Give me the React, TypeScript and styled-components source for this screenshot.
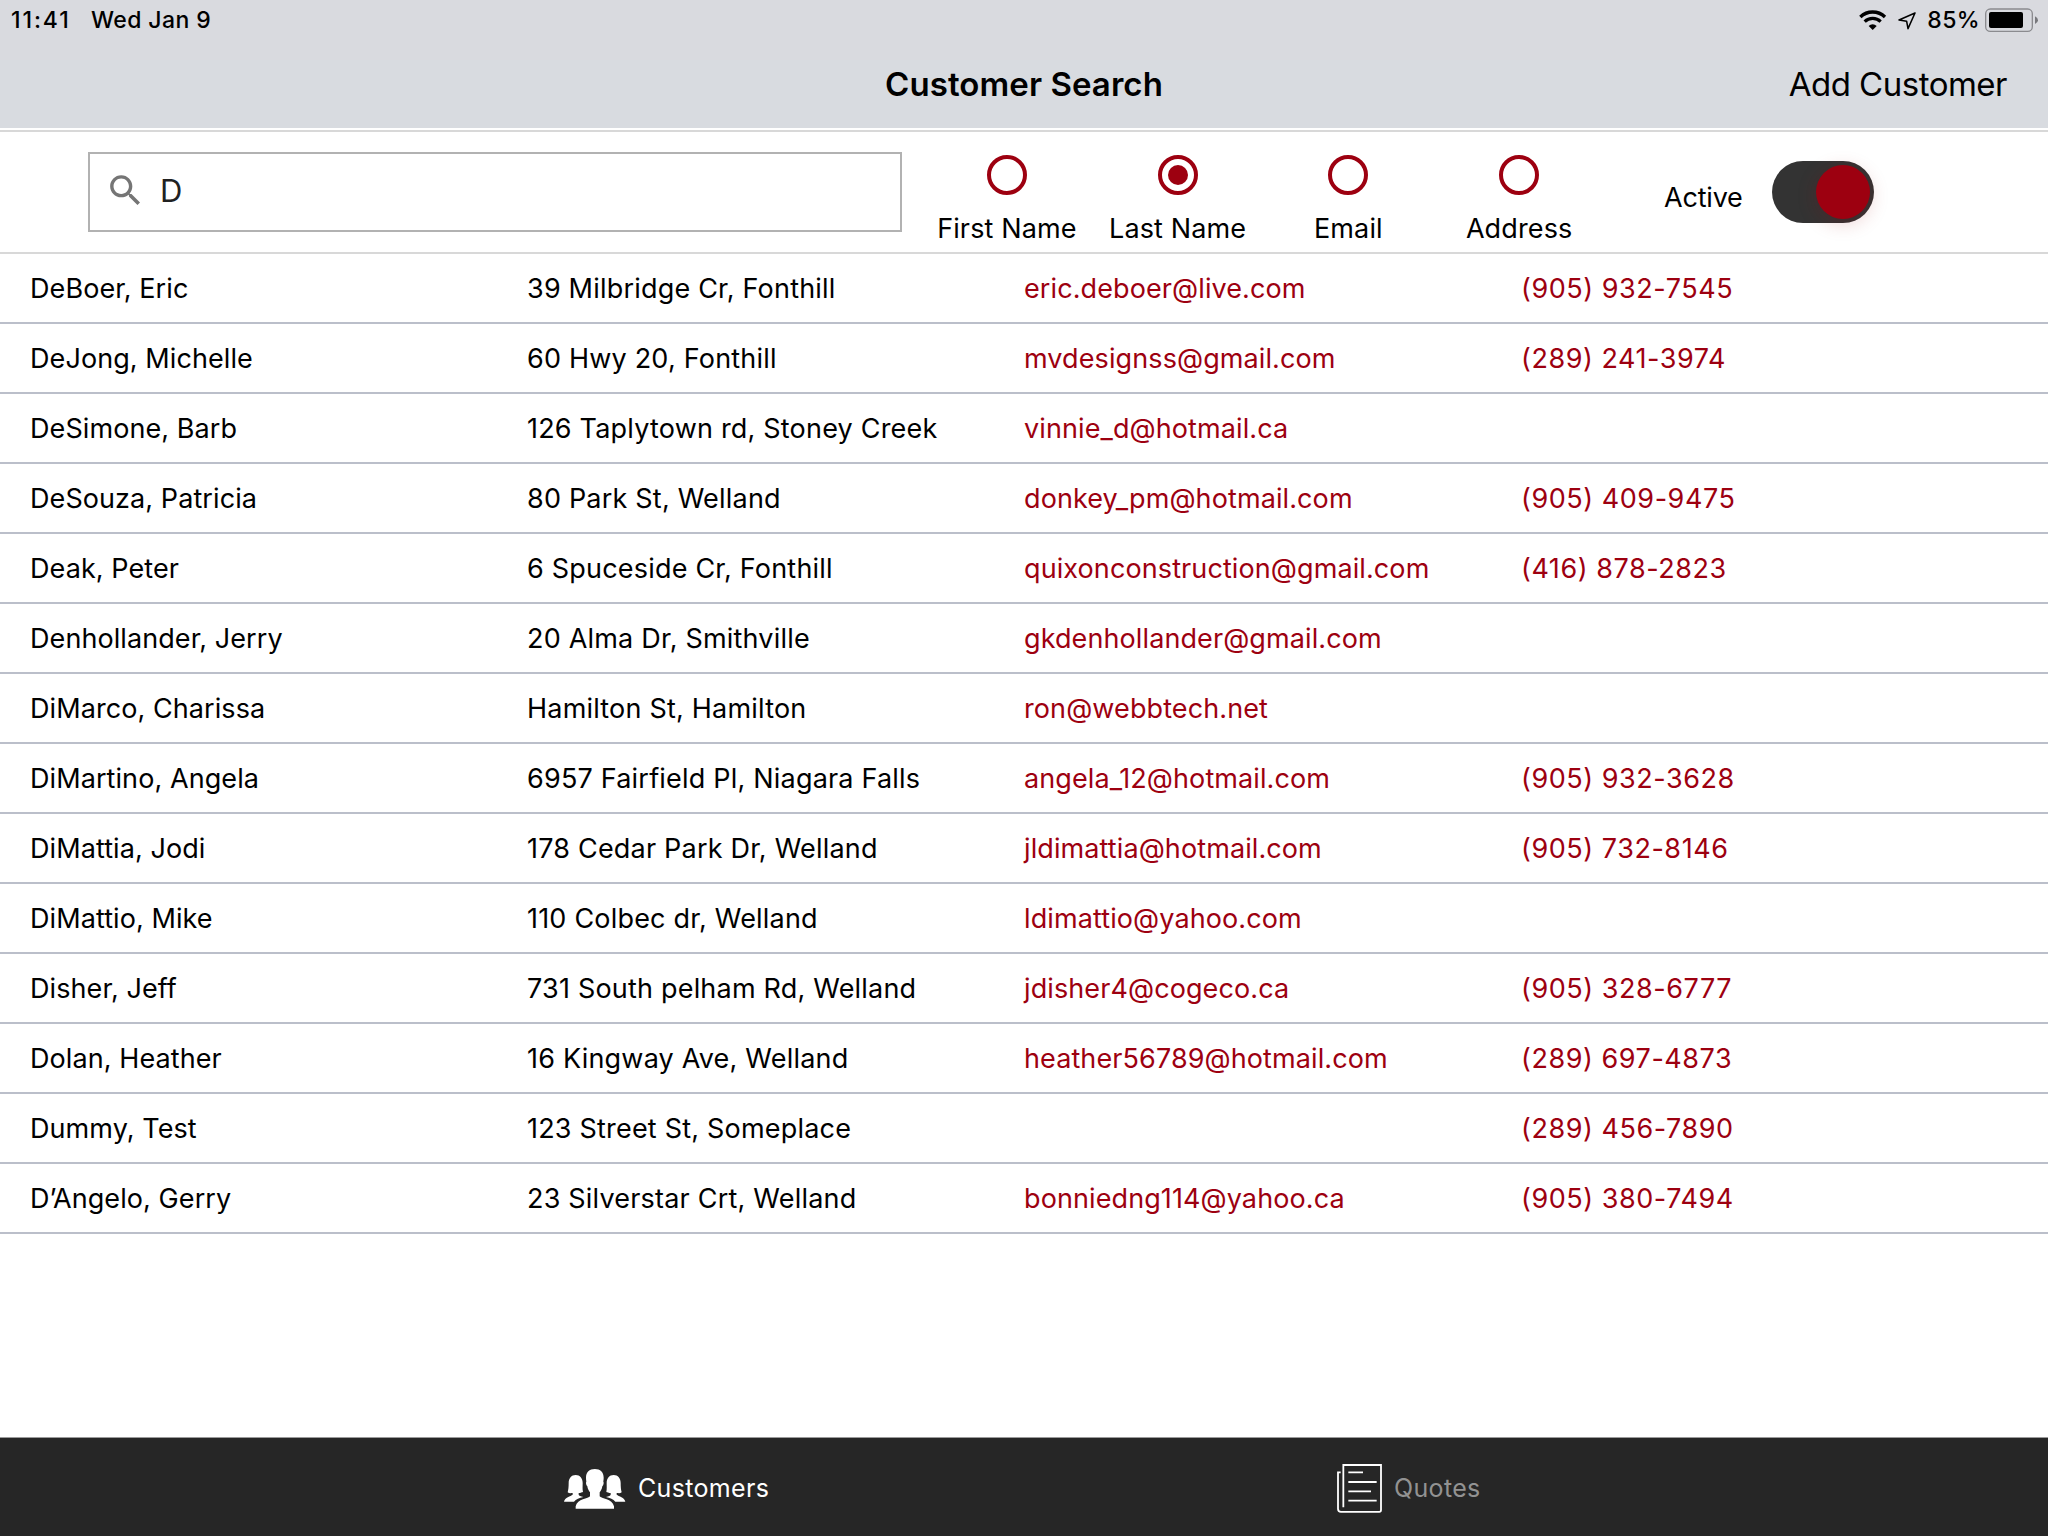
import React, { useState } from 'react';
import styled, { createGlobalStyle } from 'styled-components';

const red = '#9d0010';

const GlobalStyle = createGlobalStyle`
  * { box-sizing: border-box; }
  body {
    margin: 0;
    background: #fff;
    color: #000;
    font-family: Inter, "Liberation Sans", sans-serif;
    font-feature-settings: "calt" 0;
  }
`;

const Screen = styled.div`
  display: flex;
  flex-direction: column;
  width: 2048px;
  height: 1536px;
  overflow: hidden;
  background: #fff;
`;

const Header = styled.header`
  flex: none;
  height: 128px;
  background: linear-gradient(#d9dadf 60px, #d8dbe0 60px);
`;

const StatusBar = styled.div`
  display: flex;
  justify-content: space-between;
  height: 40px;
  padding: 0 10px 0 11px;
  font-size: 23px;
  font-weight: 500;
  line-height: 39px;
  letter-spacing: 0.4px;
`;

const StatusGroup = styled.div`
  display: flex;
  align-items: center;
`;

const Time = styled.span`
  width: 80px;
  letter-spacing: 1.9px;
`;

const WifiIcon = styled.svg`
  width: 28px;
  height: 21px;
  margin-right: 11px;
`;

const LocationIcon = styled.svg`
  width: 18px;
  height: 18px;
  margin: 2px 11px 0 0;
`;

const BatteryIcon = styled.svg`
  width: 53px;
  height: 24px;
  margin-left: 5px;
`;

const NavBar = styled.div`
  display: grid;
  grid-template-columns: 1fr auto 1fr;
  align-items: center;
  height: 88px;
  padding: 0 41px;
`;

const Title = styled.h1`
  grid-column: 2;
  margin: 0;
  font-size: 33px;
  font-weight: 600;
  letter-spacing: 0.07px;
`;

const NavAction = styled.button`
  justify-self: end;
  padding: 0;
  border: 0;
  background: none;
  color: #000;
  font: inherit;
  font-size: 33px;
  letter-spacing: -0.5px;
`;

const FilterBar = styled.section`
  display: grid;
  grid-template-columns: 921.5px 683px 1fr;
  flex: none;
  height: 124px;
  margin-top: 2px;
  border-top: 2px solid #d8d8d8;
  border-bottom: 2px solid #d8d8d8;
  background: #fff;
`;

const SearchBox = styled.label`
  display: flex;
  align-items: center;
  width: 814px;
  height: 80px;
  margin: 20px 0 0 88px;
  padding: 0 16px 3px 15px;
  border: 2px solid #b2b2b2;
`;

const SearchIcon = styled.svg`
  flex: none;
  width: 41px;
  height: 41px;
  margin-right: 14px;
  fill: #757575;
`;

const SearchInput = styled.input`
  flex: 1;
  min-width: 0;
  height: 60px;
  padding: 0;
  border: 0;
  outline: 0;
  background: none;
  color: #212121;
  font: inherit;
  font-size: 31px;
`;

const RadioGroup = styled.div`
  display: grid;
  grid-template-columns: repeat(4, 1fr);
`;

const RadioOption = styled.button`
  display: flex;
  flex-direction: column;
  align-items: center;
  padding: 23px 0 0;
  border: 0;
  background: none;
  color: #000;
  font: inherit;
  font-size: 27px;
  line-height: 33px;
  letter-spacing: 0.12px;
  white-space: nowrap;
`;

const RadioCircle = styled.span<{ $selected: boolean }>`
  display: grid;
  place-items: center;
  width: 40px;
  height: 40px;
  margin-bottom: 17px;
  border: 4px solid ${red};
  border-radius: 50%;

  &::after {
    content: "";
    width: 20px;
    height: 20px;
    border-radius: 50%;
    background: ${(p) => (p.$selected ? red : 'transparent')};
  }
`;

const ActiveFilter = styled.div`
  display: flex;
  align-items: center;
  padding-left: 59.5px;
  font-size: 27px;
  letter-spacing: -0.2px;
`;

const ActiveLabel = styled.span`
  width: 108px;
  padding-top: 11px;
`;

const Switch = styled.button<{ $on: boolean }>`
  display: flex;
  justify-content: ${(p) => (p.$on ? 'flex-end' : 'flex-start')};
  width: 102px;
  height: 62px;
  padding: 4px;
  border: 0;
  border-radius: 31px;
  background: #333;
`;

const Thumb = styled.span`
  width: 54px;
  height: 54px;
  border-radius: 50%;
  background: ${red};
  box-shadow: 0 4px 20px rgba(157, 0, 16, 0.2);
`;

const CustomerList = styled.main`
  flex: 1;
  min-height: 0;
`;

const CustomerRow = styled.div`
  display: grid;
  grid-template-columns: repeat(4, 497px);
  align-items: center;
  height: 70px;
  padding-left: 30px;
  border-bottom: 2px solid #bbbfca;
  font-size: 27px;
  white-space: nowrap;
`;

const Cell = styled.span<{ $tracking: number; $link?: boolean }>`
  color: ${(p) => (p.$link ? red : '#000')};
  letter-spacing: ${(p) => p.$tracking}px;
`;

const TabBar = styled.nav`
  display: flex;
  flex: none;
  height: 99px;
  padding: 2px 0 0 564px;
  border-top: 1px solid #9b9b9b;
  background: #262626;
`;

const Tab = styled.button<{ $active: boolean }>`
  display: flex;
  flex: 0 0 ${(p) => (p.$active ? 773 : 711)}px;
  align-items: center;
  padding: 0;
  border: 0;
  background: none;
  color: ${(p) => (p.$active ? '#fff' : '#929292')};
  font: inherit;
  font-size: 25px;
  letter-spacing: 0.34px;
  text-align: left;
`;

const PeopleIcon = styled.svg`
  width: 62px;
  height: 40px;
  margin: 2px 12px 0 0;
  fill: #fff;
`;

const QuotesIcon = styled.svg`
  width: 45px;
  height: 49px;
  margin-right: 12px;
  fill: none;
  stroke: #fff;
  stroke-width: 5.4;
`;

const customers: [string, string, string, string][] = [
  ['DeBoer, Eric', '39 Milbridge Cr, Fonthill', 'eric.deboer@live.com', '(905) 932-7545'],
  ['DeJong, Michelle', '60 Hwy 20, Fonthill', 'mvdesignss@gmail.com', '(289) 241-3974'],
  ['DeSimone, Barb', '126 Taplytown rd, Stoney Creek', 'vinnie_d@hotmail.ca', ''],
  ['DeSouza, Patricia', '80 Park St, Welland', 'donkey_pm@hotmail.com', '(905) 409-9475'],
  ['Deak, Peter', '6 Spuceside Cr, Fonthill', 'quixonconstruction@gmail.com', '(416) 878-2823'],
  ['Denhollander, Jerry', '20 Alma Dr, Smithville', 'gkdenhollander@gmail.com', ''],
  ['DiMarco, Charissa', 'Hamilton St, Hamilton', 'ron@webbtech.net', ''],
  ['DiMartino, Angela', '6957 Fairfield Pl, Niagara Falls', 'angela_12@hotmail.com', '(905) 932-3628'],
  ['DiMattia, Jodi', '178 Cedar Park Dr, Welland', 'jldimattia@hotmail.com', '(905) 732-8146'],
  ['DiMattio, Mike', '110 Colbec dr, Welland', 'ldimattio@yahoo.com', ''],
  ['Disher, Jeff', '731 South pelham Rd, Welland', 'jdisher4@cogeco.ca', '(905) 328-6777'],
  ['Dolan, Heather', '16 Kingway Ave, Welland', 'heather56789@hotmail.com', '(289) 697-4873'],
  ['Dummy, Test', '123 Street St, Someplace', '', '(289) 456-7890'],
  ['D’Angelo, Gerry', '23 Silverstar Crt, Welland', 'bonniedng114@yahoo.ca', '(905) 380-7494'],
];

const searchFields = ['First Name', 'Last Name', 'Email', 'Address'];

const sidePerson =
  'M35 18C22 18 14 28 14 42C14 54 13 62 11 70C16 74 22 72 26 72V77C20 82 2 84 0 98H30C36 91 46 86 58 84C50 82 45 80 44 77V72C50 72 54 70 57 69C55 60 56 52 56 42C56 28 48 18 35 18Z';

export default function App() {
  const [query, setQuery] = useState('D');
  const [field, setField] = useState('Last Name');
  const [active, setActive] = useState(true);

  return (
    <Screen>
      <GlobalStyle />
      <Header>
        <StatusBar>
          <StatusGroup>
            <Time>11:41</Time>
            <span>Wed Jan 9</span>
          </StatusGroup>
          <StatusGroup>
            <WifiIcon viewBox="0 0 84 63">
              <g fill="none" stroke="#000">
                <path d="M4 21A53 53 0 0 1 78 21" strokeWidth="10" />
                <path d="M17 35A34 34 0 0 1 65 35" strokeWidth="9.5" />
              </g>
              <path d="M41 60L29 48A17 17 0 0 1 53 48Z" />
            </WifiIcon>
            <LocationIcon viewBox="0 0 54 54" fill="none" stroke="#000" strokeWidth="4.6" strokeLinejoin="round">
              <path d="M51 3L3 24L26 28L30 50Z" />
            </LocationIcon>
            <span>85%</span>
            <BatteryIcon viewBox="0 0 159 72">
              <rect x="2" y="3" width="140" height="67" rx="14" fill="none" stroke="#8b8b8f" strokeWidth="4" />
              <rect x="12" y="12" width="102" height="48" rx="6" />
              <path d="M150 25Q159 30 159 36.500Q159 43 150 48Z" fill="#77777b" />
            </BatteryIcon>
          </StatusGroup>
        </StatusBar>
        <NavBar>
          <Title>Customer Search</Title>
          <NavAction>Add Customer</NavAction>
        </NavBar>
      </Header>

      <FilterBar>
        <SearchBox>
          <SearchIcon viewBox="0 0 24 24">
            <path d="M15.5 14h-.79l-.28-.27C15.41 12.59 16 11.11 16 9.5 16 5.91 13.09 3 9.5 3S3 5.91 3 9.5 5.91 16 9.5 16c1.61 0 3.09-.59 4.23-1.57l.27.28v.79l5 4.99L20.49 19l-4.99-5zm-6 0C7.01 14 5 11.99 5 9.5S7.01 5 9.5 5 14 7.01 14 9.5 11.99 14 9.5 14z" />
          </SearchIcon>
          <SearchInput value={query} onChange={(e) => setQuery(e.target.value)} />
        </SearchBox>
        <RadioGroup>
          {searchFields.map((name) => (
            <RadioOption key={name} onClick={() => setField(name)}>
              <RadioCircle $selected={name === field} />
              {name}
            </RadioOption>
          ))}
        </RadioGroup>
        <ActiveFilter>
          <ActiveLabel>Active</ActiveLabel>
          <Switch $on={active} onClick={() => setActive(!active)}>
            <Thumb />
          </Switch>
        </ActiveFilter>
      </FilterBar>

      <CustomerList>
        {customers.map(([name, address, email, phone]) => (
          <CustomerRow key={name}>
            <Cell $tracking={0.08}>{name}</Cell>
            <Cell $tracking={0.2}>{address}</Cell>
            <Cell $tracking={0.1} $link>{email}</Cell>
            <Cell $tracking={0.55} $link>{phone}</Cell>
          </CustomerRow>
        ))}
      </CustomerList>

      <TabBar>
        <Tab $active>
          <PeopleIcon viewBox="0 0 186 120">
            <path d="M92.500 0C76 0 66 10 66 26C66 32 67 36 67 38C65 40 66 48 70 52C71 60 75 66 78 70V82C74 90 40 88 35 112V119H150V112C145 88 111 90 107 82V70C110 66 114 60 115 52C119 48 120 40 118 38C118 36 119 32 119 26C119 10 109 0 92.500 0Z" />
            <path d={sidePerson} />
            <path d={sidePerson} transform="translate(184 0) scale(-1 1)" />
          </PeopleIcon>
          Customers
        </Tab>
        <Tab $active={false}>
          <QuotesIcon viewBox="0 0 135 147">
            <path d="M19 130V3H132V138Q132 143.500 127 143.500H12Q3 143.500 3 134V25H11" />
            <path d="M34 25H78M34 54H119M34 82H102M34 110H119" />
          </QuotesIcon>
          Quotes
        </Tab>
      </TabBar>
    </Screen>
  );
}
